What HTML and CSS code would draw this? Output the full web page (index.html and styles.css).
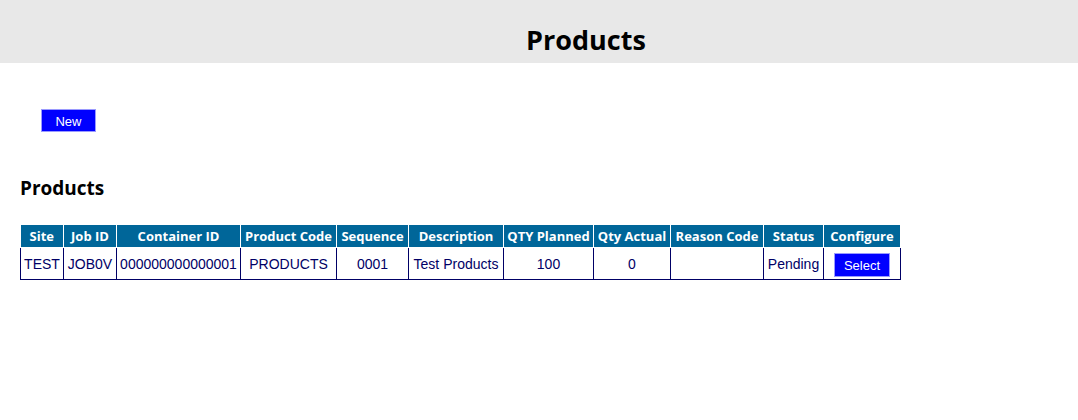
FILE: index.html
```html
<!DOCTYPE html>
<html>
<head>
<meta charset="UTF-8">
<title>Products</title>
<link rel="stylesheet" href="styles.css">
</head>
<body>
	<div class="cabecera">
		<h1>Products</h1>
	</div>

	<div class="contenido">
		<div class="acciones">
			<button class="boton nuevo">New</button>
		</div>

		<h2>Products</h2>

		<table class="productos">
			<colgroup>
				<col class="c-site">
				<col class="c-job">
				<col class="c-container">
				<col class="c-code">
				<col class="c-seq">
				<col class="c-desc">
				<col class="c-planned">
				<col class="c-actual">
				<col class="c-reason">
				<col class="c-status">
				<col class="c-config">
			</colgroup>
			<tr>
				<th>Site</th>
				<th>Job ID</th>
				<th>Container ID</th>
				<th>Product Code</th>
				<th>Sequence</th>
				<th>Description</th>
				<th>QTY Planned</th>
				<th>Qty Actual</th>
				<th>Reason Code</th>
				<th>Status</th>
				<th>Configure</th>
			</tr>
			<tr>
				<td>TEST</td>
				<td>JOB0V</td>
				<td>000000000000001</td>
				<td>PRODUCTS</td>
				<td>0001</td>
				<td>Test Products</td>
				<td>100</td>
				<td>0</td>
				<td></td>
				<td>Pending</td>
				<td><button class="boton select">Select</button></td>
			</tr>
		</table>
	</div>
</body>
</html>
```
FILE: styles.css
```css
body{
	margin:0;
	background-color:white;
	font-family:"Liberation Sans", Arial, sans-serif;
}

.cabecera{
	background-color:#e8e8e8;
	height:63px;
	padding-left:94px;
	text-align:center;
}
.cabecera h1{
	margin:0;
	padding-top:23px;
	font-family:"Open Sans", sans-serif;
	font-size:27px;
	line-height:34px;
	font-weight:bold;
	color:black;
}

.contenido{
	padding-left:20px;
}

.acciones{
	padding-top:46px;
	padding-left:21px;
	height:23px;
}

.boton{
	background-color:#0000ff;
	color:white;
	border:1px solid #9a9aff;
	font-family:"Liberation Sans", Arial, sans-serif;
	font-size:13px;
	padding:2px 0 0 0;
	cursor:pointer;
}
.nuevo{
	width:55px;
	height:23px;
}
.select{
	width:56px;
	height:24px;
	margin-top:2px;
}

h2{
	margin:43px 0 0 0;
	font-family:"Open Sans", sans-serif;
	font-size:19px;
	line-height:26px;
	font-weight:bold;
	color:black;
}

.productos{
	margin-top:24px;
	border-collapse:collapse;
	table-layout:fixed;
	width:879px;
}
.productos th{
	background-color:#006699;
	color:white;
	border:1px solid white;
	height:22px;
	padding:0;
	font-family:"Open Sans", sans-serif;
	font-size:13px;
	font-weight:bold;
	white-space:nowrap;
	overflow:hidden;
}
.productos td{
	border:1px solid #000066;
	color:#000066;
	height:31px;
	padding:0;
	text-align:center;
	font-size:14px;
	white-space:nowrap;
}
.productos tr:first-child th{
	border-top:none;
}
.productos th:first-child{
	border-left:none;
}

.c-site{width:43px;}
.c-job{width:53px;}
.c-container{width:124px;}
.c-code{width:96px;}
.c-seq{width:72px;}
.c-desc{width:95px;}
.c-planned{width:90px;}
.c-actual{width:77px;}
.c-reason{width:93px;}
.c-status{width:60px;}
.c-config{width:77px;}
```
